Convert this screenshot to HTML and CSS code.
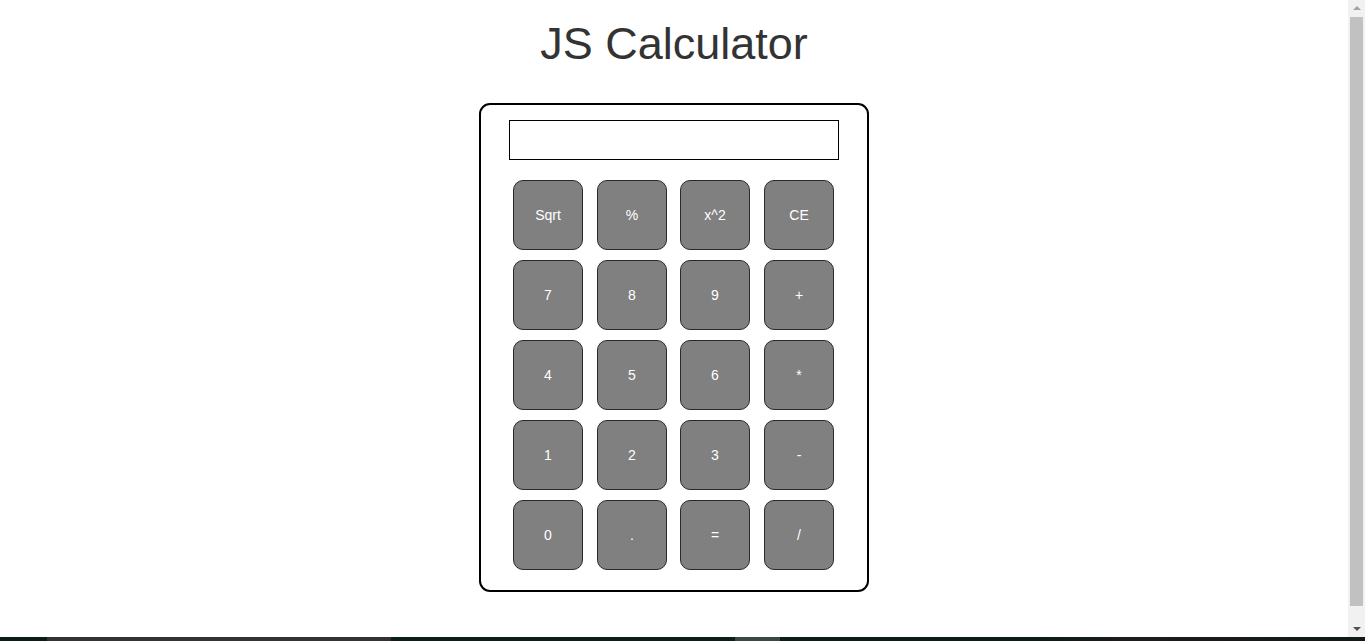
FILE: index.html
```html
<!DOCTYPE html>
<html lang="en">
<head>
<meta charset="utf-8">
<title>JS Calculator</title>
<link rel="stylesheet" href="styles.css">
</head>
<body>
<div class="screen">
  <div class="window">
    <main class="page">
      <h1 class="title">JS Calculator</h1>
      <div class="calculator">
        <div class="display"></div>
        <div class="keys">
          <button class="key">Sqrt</button>
          <button class="key">%</button>
          <button class="key">x^2</button>
          <button class="key">CE</button>
          <button class="key">7</button>
          <button class="key">8</button>
          <button class="key">9</button>
          <button class="key">+</button>
          <button class="key">4</button>
          <button class="key">5</button>
          <button class="key">6</button>
          <button class="key">*</button>
          <button class="key">1</button>
          <button class="key">2</button>
          <button class="key">3</button>
          <button class="key">-</button>
          <button class="key">0</button>
          <button class="key">.</button>
          <button class="key">=</button>
          <button class="key">/</button>
        </div>
      </div>
    </main>
    <div class="scrollbar">
      <div class="arrow arrow-up"></div>
      <div class="track"><div class="thumb"></div></div>
      <div class="arrow arrow-down"></div>
    </div>
  </div>
  <div class="taskbar">
    <div class="seg seg-a"></div>
    <div class="seg seg-b"></div>
    <div class="seg seg-c"></div>
    <div class="seg seg-d"></div>
    <div class="seg seg-e"></div>
  </div>
</div>
</body>
</html>
```

FILE: styles.css
```css
html, body {
  margin: 0;
  padding: 0;
  height: 100%;
  overflow: hidden;
  background: #ffffff;
}

.screen {
  display: flex;
  flex-direction: column;
  height: 641px;
}

.window {
  flex: 1;
  display: flex;
  min-height: 0;
}

.page {
  flex: 1;
  display: flex;
  flex-direction: column;
  align-items: center;
  font-family: "Liberation Sans", Arial, sans-serif;
}

.title {
  margin: 17px 0 0;
  font-size: 45px;
  font-weight: normal;
  line-height: 53px;
  color: #333333;
}

.calculator {
  margin-top: 33px;
  width: 386px;
  height: 485px;
  border: 2px solid #000000;
  border-radius: 11px;
  display: flex;
  flex-direction: column;
  align-items: center;
  box-sizing: content-box;
}

.display {
  margin-top: 15px;
  width: 328px;
  height: 38px;
  border: 1px solid #000000;
}

.keys {
  margin-top: 20px;
  margin-right: 1px;
  display: grid;
  grid-template-columns: 84px 83px 84px 70px;
  grid-auto-rows: 70px;
  row-gap: 10px;
}

.key {
  box-sizing: border-box;
  width: 70px;
  height: 70px;
  background: #808080;
  border: 1px solid #2a2a2a;
  border-radius: 10px;
  color: #ffffff;
  font-family: "Liberation Sans", Arial, sans-serif;
  font-size: 14px;
  padding: 0;
}

.scrollbar {
  width: 17px;
  background: #f1f1f1;
  display: flex;
  flex-direction: column;
  align-items: center;
}

.arrow {
  width: 0;
  height: 0;
  border-left: 4px solid transparent;
  border-right: 4px solid transparent;
}

.arrow-up {
  margin-top: 6px;
  border-bottom: 4px solid #a3a3a3;
}

.arrow-down {
  margin-bottom: 6px;
  border-top: 4px solid #505050;
}

.track {
  flex: 1;
  width: 100%;
  display: flex;
  flex-direction: column;
  align-items: center;
  padding: 7px 0 21px;
  box-sizing: border-box;
}

.thumb {
  flex: 1;
  width: 13px;
  background: #c1c1c1;
}

.taskbar {
  height: 4px;
  display: flex;
  background: #0b1d16;
}

.seg-a { width: 47px; background: #0b1d16; }
.seg-b { width: 344px; background: #333333; }
.seg-c { width: 344px; background: #0c1f17; }
.seg-d { width: 45px; background: #3a4844; }
.seg-e { flex: 1; background: linear-gradient(90deg, #0b1d16 0%, #0b1d16 45%, #1c1c1c 60%, #0f1a15 100%); }
```
